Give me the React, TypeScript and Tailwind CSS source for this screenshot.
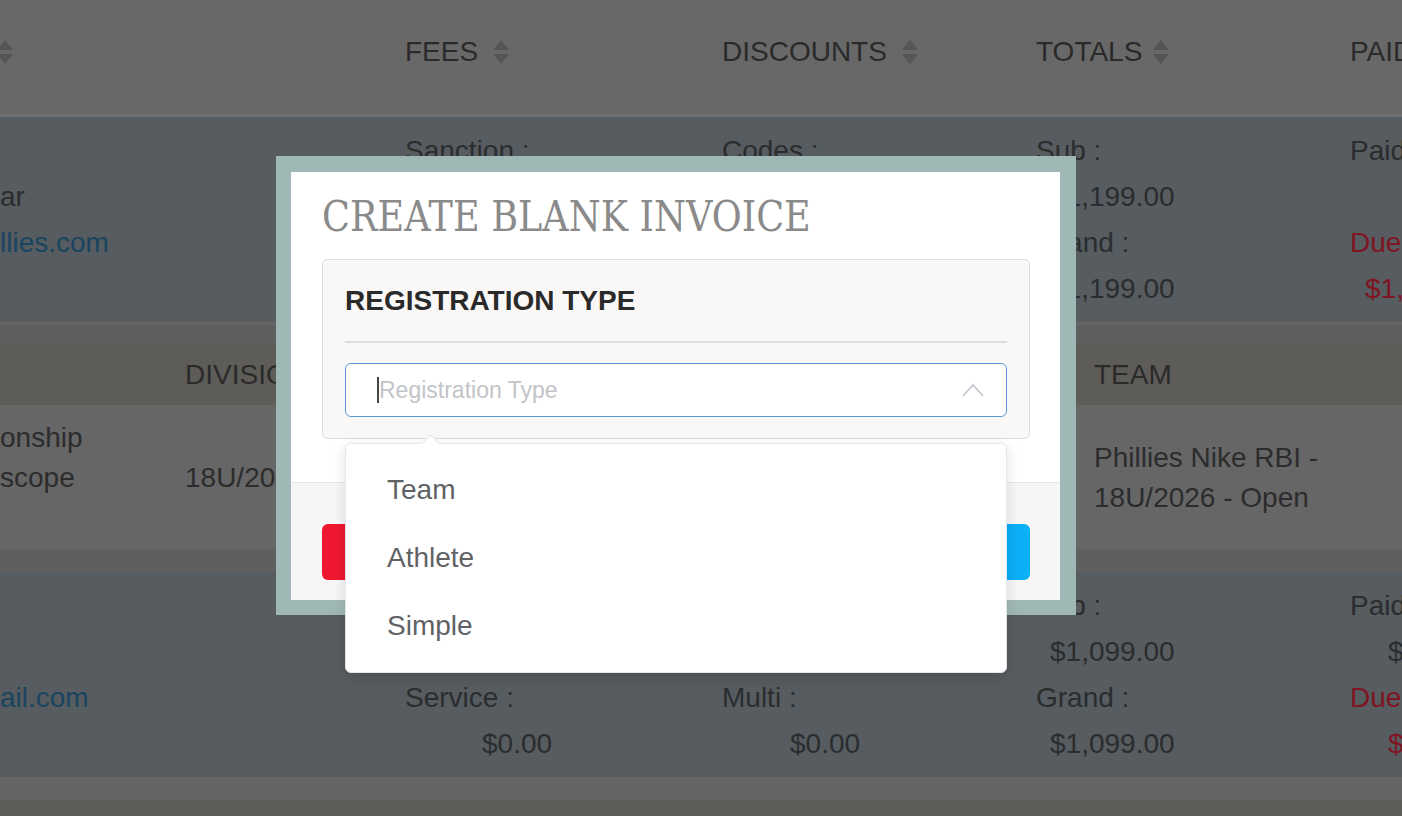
import React from 'react';

const sans = "font-['Liberation_Sans',Arial,sans-serif]";

type Line = { text: string; tone?: 'blue' | 'red'; indent?: string };

function SortIcon() {
  return (
    <svg width="18" height="26" viewBox="0 0 18 26" className="shrink-0">
      <path d="M9 1 L17 11 L1 11 Z" fill="#555" />
      <path d="M1 15 L17 15 L9 25 Z" fill="#555" />
    </svg>
  );
}

function Cell({ lines }: { lines: Line[] }) {
  return (
    <div className="flex flex-col overflow-hidden">
      {lines.map((l, i) => (
        <div
          key={i}
          className={`h-[46px] leading-[46px] whitespace-nowrap ${l.indent ?? ''} ${
            l.tone === 'blue' ? 'text-[#1a4560]' : l.tone === 'red' ? 'text-[#7f1422]' : 'text-[#2a2d2f]'
          }`}
        >
          {l.text || '\u00a0'}
        </div>
      ))}
    </div>
  );
}

function MoneyRow({ cols }: { cols: Line[][] }) {
  return (
    <div className="grid grid-cols-[405px_317px_314px_314px_1fr] h-[204px] pt-[10px] bg-[#565c5f]">
      {cols.map((c, i) => (
        <Cell key={i} lines={c} />
      ))}
    </div>
  );
}

export default function App() {
  const row1: Line[][] = [
    [{ text: '' }, { text: 'ar' }, { text: 'llies.com', tone: 'blue' }, { text: '' }],
    [{ text: 'Sanction :' }, { text: '$100.00', indent: 'pl-[77px]' }, { text: 'Service :' }, { text: '$0.00', indent: 'pl-[77px]' }],
    [{ text: 'Codes :' }, { text: '$0.00', indent: 'pl-[68px]' }, { text: 'Multi :' }, { text: '$0.00', indent: 'pl-[68px]' }],
    [{ text: 'Sub :' }, { text: '$1,199.00', indent: 'pl-[14px]' }, { text: 'Grand :' }, { text: '$1,199.00', indent: 'pl-[14px]' }],
    [{ text: 'Paid' }, { text: '' }, { text: 'Due', tone: 'red' }, { text: '$1,199.00', tone: 'red', indent: 'pl-[15px]' }],
  ];
  const row3: Line[][] = [
    [{ text: '' }, { text: '' }, { text: 'ail.com', tone: 'blue' }, { text: '' }],
    [{ text: 'Sanction :' }, { text: '$0.00', indent: 'pl-[77px]' }, { text: 'Service :' }, { text: '$0.00', indent: 'pl-[77px]' }],
    [{ text: 'Codes :' }, { text: '$0.00', indent: 'pl-[68px]' }, { text: 'Multi :' }, { text: '$0.00', indent: 'pl-[68px]' }],
    [{ text: 'Sub :' }, { text: '$1,099.00', indent: 'pl-[14px]' }, { text: 'Grand :' }, { text: '$1,099.00', indent: 'pl-[14px]' }],
    [{ text: 'Paid' }, { text: '$0.00', indent: 'pl-[38px]' }, { text: 'Due', tone: 'red' }, { text: '$1,099.00', tone: 'red', indent: 'pl-[38px]' }],
  ];

  return (
    <div className={`relative w-[1402px] h-[816px] overflow-hidden bg-[#5e5c58] text-[28px] ${sans}`}>
      {/* table header */}
      <div className="grid grid-cols-[405px_317px_314px_314px_1fr] items-center h-[117px] pb-[10px] bg-[#686868] border-b-[3px] border-[#717171] text-[#2a2a2a]">
        <div className="-ml-[4px]">
          <SortIcon />
        </div>
        <div className="flex items-center gap-[14px]">
          <span>FEES</span>
          <SortIcon />
        </div>
        <div className="flex items-center gap-[14px]">
          <span>DISCOUNTS</span>
          <SortIcon />
        </div>
        <div className="flex items-center gap-[10px]">
          <span>TOTALS</span>
          <SortIcon />
        </div>
        <div className="whitespace-nowrap">PAID</div>
      </div>

      <div className="h-[205px] pt-[11px] bg-[#565c5f] grid grid-cols-[405px_317px_314px_314px_1fr]">
        {row1.map((c, i) => (
          <Cell key={i} lines={c} />
        ))}
      </div>

      <div className="h-[23px] bg-[#5f5f5f] border-t-[3px] border-[#666]" />

      {/* second header */}
      <div className="grid grid-cols-[185px_909px_1fr] items-center h-[60px] bg-[#5e5c58] text-[#2a2a2a]">
        <div />
        <div>DIVISION</div>
        <div>TEAM</div>
      </div>

      <div className="grid grid-cols-[185px_909px_1fr] items-center h-[145px] bg-[#666] text-[#2c2c2c] leading-[40px]">
        <div className="flex flex-col whitespace-nowrap">
          <span>onship</span>
          <span>scope</span>
          <span>&nbsp;</span>
        </div>
        <div>18U/2026</div>
        <div className="flex flex-col whitespace-nowrap">
          <span>Phillies Nike RBI -</span>
          <span>18U/2026 - Open</span>
        </div>
      </div>

      <div className="h-[23px] bg-[#5f5f5f]" />

      <MoneyRow cols={row3} />

      <div className="h-[23px] bg-[#656565]" />

      {/* modal */}
      <div className="absolute left-[276px] top-[156px] w-[800px] h-[459px] bg-[#a0b8b5] pt-[16px] pl-[15px] pr-[16px] pb-[15px]">
        <div className="h-full bg-white flex flex-col">
          <div className="px-[31px] pt-[24px]">
            <h2 className="font-['DejaVu_Serif',serif] text-[42px] leading-none text-[#8a8a8a] whitespace-nowrap origin-left scale-x-[0.87]">
              CREATE BLANK INVOICE
            </h2>
          </div>
          <div className="mt-[21px] ml-[31px] mr-[30px] h-[180px] rounded-[5px] border border-[#dcdcdc] bg-[#faf8f7] px-[22px] pt-[27px]">
            <div className="text-[28px] leading-none font-bold text-[#2a2a2a] pb-[26px] border-b-[2px] border-[#e0dedd]">
              REGISTRATION TYPE
            </div>
            <div className="mt-[20px] h-[54px] rounded-[6px] border-[1.5px] border-[#5b97d6] bg-white flex items-center pl-[31px] pr-[22px]">
              <span className="w-[2px] h-[26px] bg-[#444]" />
              <span className="text-[23px] text-[#c2c4c8] flex-1">Registration Type</span>
              <svg width="22" height="14" viewBox="0 0 22 14">
                <polyline points="1,13 11,2 21,13" fill="none" stroke="#c0c4cc" strokeWidth="1.6" />
              </svg>
            </div>
          </div>
          <div className="mt-[43px] flex-1 border-t border-[#e6e6e6] bg-[#f6f6f6] flex justify-between items-start pt-[41px] px-[30px] pl-[31px]">
            <button className="h-[56px] w-[170px] rounded-[6px] bg-[#ef1730] text-white text-[24px]">Cancel</button>
            <button className="h-[56px] w-[170px] rounded-[6px] bg-[#0bb0f7] text-white text-[24px]">Create</button>
          </div>
        </div>
      </div>

      {/* select dropdown */}
      <div className="absolute left-[345px] top-[443px] w-[662px] h-[230px] rounded-[6px] border border-[#e4e7ed] bg-white shadow-[0_4px_14px_rgba(0,0,0,0.12)] py-[12px]">
        <span className="absolute -top-[7px] left-[78px] w-[13px] h-[13px] rotate-45 bg-white border-l border-t border-[#e4e7ed]" />
        {['Team', 'Athlete', 'Simple'].map((o) => (
          <div key={o} className="h-[68px] leading-[68px] pl-[41px] text-[28px] text-[#606266]">
            {o}
          </div>
        ))}
      </div>
    </div>
  );
}
